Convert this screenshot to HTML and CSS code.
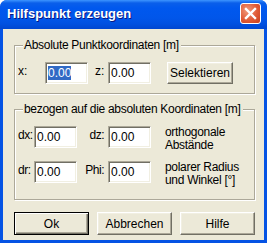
FILE: index.html
```html
<!DOCTYPE html>
<html lang="de">
<head>
    <meta charset="UTF-8">
    <title>Hilfspunkt erzeugen</title>
    <link rel="stylesheet" href="styles.css">
</head>
<body>
    <div class="window">
        <!-- Title bar -->
        <div class="titlebar">
            <span class="title">Hilfspunkt erzeugen</span>
            <div class="close">
                <svg width="13" height="13" viewBox="0 0 13 13">
                    <path d="M2 2 L11 11 M11 2 L2 11" stroke="#fff" stroke-width="2.4" stroke-linecap="square"/>
                </svg>
            </div>
        </div>

        <!-- Dialog body -->
        <div class="client">
            <fieldset class="group group-abs">
                <legend>Absolute Punktkoordinaten [m]</legend>
                <div class="row">
                    <span class="label label-x">x:</span>
                    <div class="textbox"><span class="selected">0.00</span></div>
                    <span class="label label-z">z:</span>
                    <div class="textbox">0.00</div>
                    <button class="btn btn-select">Selektieren</button>
                </div>
            </fieldset>

            <fieldset class="group group-rel">
                <legend>bezogen auf die absoluten Koordinaten [m]</legend>
                <div class="rel-grid">
                    <span class="label">dx:</span>
                    <div class="textbox">0.00</div>
                    <span class="label label-right">dz:</span>
                    <div class="textbox">0.00</div>
                    <span class="note">orthogonale<br>Abstände</span>

                    <span class="label">dr:</span>
                    <div class="textbox">0.00</div>
                    <span class="label label-right">Phi:</span>
                    <div class="textbox">0.00</div>
                    <span class="note">polarer Radius<br>und Winkel [°]</span>
                </div>
            </fieldset>

            <div class="actions">
                <button class="btn btn-default">Ok</button>
                <button class="btn">Abbrechen</button>
                <button class="btn">Hilfe</button>
            </div>
        </div>
    </div>
</body>
</html>
```

FILE: styles.css
```css
/* General Styles */
body {
    margin: 0;
    font-family: 'Liberation Sans', Arial, sans-serif;
    font-size: 11px;
    color: #000;
    background: #ffffff;
}

.window {
    width: 267px;
    height: 243px;
    display: flex;
    flex-direction: column;
    background: #0553e4;
    border-radius: 7px 7px 0 0;
    box-sizing: border-box;
    overflow: hidden;
}

/* Title bar */
.titlebar {
    height: 29px;
    flex: none;
    display: flex;
    align-items: center;
    justify-content: space-between;
    padding: 0 6px 0 7px;
    background: linear-gradient(#3d95ff 0, #0a5fea 3px, #0058ee 8px, #0156ea 18px, #0050e0 24px, #0046d0 29px);
}

.title {
    color: #fff;
    font-weight: bold;
    font-size: 13px;
    text-shadow: 1px 1px 0 #0a1883;
    padding-bottom: 2px;
}

.close {
    width: 19px;
    height: 19px;
    border: 1px solid #fff;
    border-radius: 3px;
    background: radial-gradient(circle at 35% 35%, #f09a7c 0, #e05a35 55%, #c83e1c 100%);
    display: flex;
    align-items: center;
    justify-content: center;
    margin-bottom: 2px;
}

/* Client area */
.client {
    flex: 1;
    margin: 0 3px 3px;
    background: #ece9d8;
    padding: 9px 0 0 11px;
}

.group {
    width: 241px;
    box-sizing: border-box;
    margin: 0;
    border: 1px solid #aca899;
    box-shadow: inset 1px 1px 0 #fff, 1px 1px 0 #fff;
}

.group legend {
    margin-left: 5px;
    padding: 0 2px 0 1px;
    line-height: 14px;
    white-space: nowrap;
    font-size: 12px;
    letter-spacing: -0.3px;
    background: #ece9d8;
}

.group-abs {
    padding: 10px 0 9px 3px;
}

.group-rel {
    margin-top: 8px;
    padding: 10px 0 12px 3px;
}

.row {
    display: flex;
    align-items: flex-start;
}

.label {
    padding-top: 2px;
    line-height: 14px;
    font-size: 12px;
}

.label-x {
    width: 27px;
}

.label-z {
    width: 13px;
    margin-left: 7px;
}

.textbox {
    width: 43px;
    height: 22px;
    box-sizing: border-box;
    background: #fff;
    border: 1px solid;
    border-color: #aca899 #fff #fff #aca899;
    box-shadow: inset 1px 1px 0 #716f64, inset -1px -1px 0 #f1efe2;
    padding: 3px 0 0 2px;
    line-height: 14px;
    font-size: 12px;
}

.selected {
    background: #316ac5;
    color: #fff;
}

.rel-grid {
    display: grid;
    grid-template-columns: 16px 43px 31px 43px auto;
    row-gap: 9px;
    align-items: start;
}

.rel-grid .label {
    letter-spacing: -0.5px;
}

.label-right {
    text-align: right;
    padding-right: 4px;
}

.note {
    margin-left: 14px;
    line-height: 13px;
    font-size: 12px;
    letter-spacing: -0.3px;
    white-space: nowrap;
}

/* Buttons */
.btn {
    height: 23px;
    box-sizing: border-box;
    font-family: inherit;
    font-size: 12px;
    color: #000;
    background: #ece9d8;
    border: 1px solid;
    border-color: #fff #716f64 #716f64 #fff;
    box-shadow: inset -1px -1px 0 #aca899, inset 1px 1px 0 #f1efe2;
    padding: 0;
}

.btn-select {
    width: 66px;
    height: 22px;
    margin-left: 16px;
}

.actions {
    display: flex;
    gap: 8px;
    margin-top: 12px;
}

.actions .btn {
    width: 75px;
}

.btn-default {
    border: 1px solid #000;
    box-shadow: inset 1px 1px 0 #fff, inset -1px -1px 0 #716f64, inset -2px -2px 0 #aca899;
}
```
